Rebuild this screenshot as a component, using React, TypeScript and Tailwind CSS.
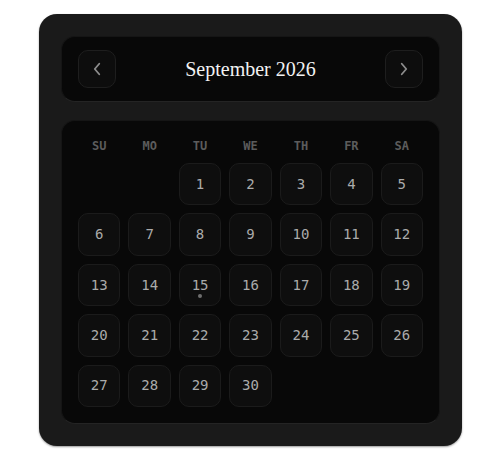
import React from 'react';

const WEEKDAYS = ['SU', 'MO', 'TU', 'WE', 'TH', 'FR', 'SA'];

// September 2026 starts on a Tuesday
const LEADING_BLANKS = 2;
const DAYS_IN_MONTH = 30;
const MARKED_DAY = 15;

const Chevron: React.FC<{ dir: 'left' | 'right' }> = ({ dir }) => (
  <svg width="18" height="18" viewBox="0 0 24 24" fill="none" stroke="currentColor" strokeWidth="2.4" strokeLinecap="round" strokeLinejoin="round">
    {dir === 'left' ? <path d="M15 5l-6 7 6 7" /> : <path d="M9 5l6 7-6 7" />}
  </svg>
);

const App: React.FC = () => {
  const cells: (number | null)[] = [
    ...Array.from({ length: LEADING_BLANKS }, () => null),
    ...Array.from({ length: DAYS_IN_MONTH }, (_, i) => i + 1),
  ];

  return (
    <div className="min-h-screen bg-white pt-[14px] pl-[39px]">
      <div className="w-[423px] rounded-[18px] bg-[#1a1a1a] p-[22px] shadow-[0_1px_2px_rgba(0,0,0,0.4)]">
        {/* Header */}
        <div className="h-[66px] flex items-center justify-between px-4 rounded-[14px] bg-[#080808] border border-[#151515] border-b-[#242424]">
          <button className="w-[38px] h-[38px] rounded-[10px] bg-[#0d0d0d] border border-[#1e1e1e] text-[#8c8c8c] flex items-center justify-center">
            <Chevron dir="left" />
          </button>
          <h2 className="text-[20px] text-[#f2f2f2] font-['Liberation_Serif',serif]">September 2026</h2>
          <button className="w-[38px] h-[38px] rounded-[10px] bg-[#0d0d0d] border border-[#1e1e1e] text-[#8c8c8c] flex items-center justify-center">
            <Chevron dir="right" />
          </button>
        </div>

        {/* Month grid */}
        <div className="mt-[18px] p-4 rounded-[14px] bg-[#080808] border border-[#151515] border-b-[#242424] font-['DejaVu_Sans_Mono',monospace]">
          <div className="grid grid-cols-7 gap-2 mb-2">
            {WEEKDAYS.map((d) => (
              <div key={d} className="h-[18px] flex items-center justify-center text-[12px] font-bold text-[#5c5c5c]">
                {d}
              </div>
            ))}
          </div>
          <div className="grid grid-cols-7 gap-2">
            {cells.map((day, i) =>
              day === null ? (
                <div key={`b${i}`} className="aspect-square" />
              ) : (
                <div
                  key={day}
                  className="relative aspect-square rounded-[10px] bg-[#0e0e0e] border border-[#1b1b1b] flex items-center justify-center text-[14px] text-[#ababab]"
                >
                  {day}
                  {day === MARKED_DAY && (
                    <span className="absolute bottom-[7px] left-1/2 -translate-x-1/2 w-1 h-1 rounded-full bg-[#6e6e6e]" />
                  )}
                </div>
              )
            )}
          </div>
        </div>
      </div>
    </div>
  );
};

export default App;
